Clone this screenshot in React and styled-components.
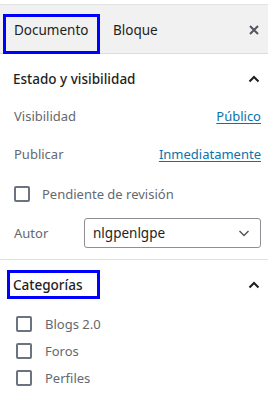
import styled, { createGlobalStyle } from "styled-components";

const GlobalStyle = createGlobalStyle`
    body {
        margin: 0;
        background: #fff;
        font-family: "Noto Sans", "Open Sans", sans-serif;
        font-size: 13px;
        color: #1e1e1e;
    }
`

const ChevronUp = () => (
    <svg width="14" height="14" viewBox="0 0 14 14">
        <path d="M2.5 9.5 L7 5 L11.5 9.5" fill="none" stroke="#1e1e1e" strokeWidth="2" />
    </svg>
)

const CloseIcon = () => (
    <svg width="12" height="12" viewBox="0 0 12 12">
        <path d="M2 2 L10 10 M10 2 L2 10" stroke="#50575e" strokeWidth="2" />
    </svg>
)

const ChevronDown = () => (
    <svg width="14" height="14" viewBox="0 0 14 14">
        <path d="M2.5 5 L7 9.5 L11.5 5" fill="none" stroke="#50575e" strokeWidth="1.5" />
    </svg>
)

const categories = ["Blogs 2.0", "Foros", "Perfiles"]

const App = () => {
    return (
        <>
            <GlobalStyle />
            <Panel>
                <Header>
                    <Tab $active>Documento</Tab>
                    <Tab>Bloque</Tab>
                    <CloseButton><CloseIcon /></CloseButton>
                </Header>

                <Section>
                    <SectionTitle>
                        <TitleText>Estado y visibilidad</TitleText>
                        <ChevronUp />
                    </SectionTitle>
                    <Rows>
                        <Row>
                            <Label>Visibilidad</Label>
                            <LinkText>Público</LinkText>
                        </Row>
                        <Row $top={14}>
                            <Label>Publicar</Label>
                            <LinkText>Inmediatamente</LinkText>
                        </Row>
                        <CheckRow $top={16}>
                            <Box />
                            <Label>Pendiente de revisión</Label>
                        </CheckRow>
                        <Row $top={12}>
                            <Label>Autor</Label>
                            <Select>
                                <span>nlgpenlgpe</span>
                                <ChevronDown />
                            </Select>
                        </Row>
                    </Rows>
                </Section>

                <Section>
                    <SectionTitle>
                        <Marked>Categorías</Marked>
                        <ChevronUp />
                    </SectionTitle>
                    <List>
                        {categories.map((name) =>
                            <ListItem key={name}>
                                <Box />
                                <Label>{name}</Label>
                            </ListItem>
                        )}
                    </List>
                </Section>
            </Panel>
        </>
    )
}

const Panel = styled.div`
    width: 268px;
    padding-top: 4px;
`

const Header = styled.div`
    display: flex;
    align-items: flex-end;
    height: 48px;
    background: #f1f1f2;
    border-top: 1px solid #e2e3e5;
    border-bottom: 1px solid #dcdcde;
    padding-left: 3px;
`

const Tab = styled.div`
    box-sizing: border-box;
    height: 40px;
    margin-bottom: -1px;
    width: ${(p) => (p.$active ? "97px" : "auto")};
    border: 3px solid ${(p) => (p.$active ? "#0000ff" : "transparent")};
    padding: 4px 0 0 ${(p) => (p.$active ? "8px" : "10px")};
    line-height: 18px;
    font-size: 13.5px;
    color: #1e1e1e;
`

const CloseButton = styled.div`
    margin-left: auto;
    margin-right: 8px;
    align-self: center;
    display: flex;
    padding-top: 2px;
`

const Section = styled.div`
    border-bottom: 1px solid #e0e0e0;
    padding: 0 7px 11px 14px;

    &:last-child {
        border-bottom: none;
    }
`

const SectionTitle = styled.div`
    display: flex;
    align-items: center;
    justify-content: space-between;
    height: 50px;
`

const TitleText = styled.span`
    font-weight: 500;
    font-size: 13.5px;
    margin-left: -1px;
`

const Marked = styled.span`
    box-sizing: border-box;
    width: 93px;
    height: 29px;
    margin-left: -7px;
    margin-top: -1px;
    padding-left: 3px;
    border: 3px solid #0000ff;
    display: flex;
    align-items: center;
    font-weight: 500;
    font-size: 13.5px;
`

const Rows = styled.div`
    display: flex;
    flex-direction: column;
`

const Row = styled.div`
    display: flex;
    align-items: center;
    justify-content: space-between;
    min-height: 24px;
    margin-top: ${(p) => p.$top || 0}px;
`

const CheckRow = styled.div`
    display: flex;
    align-items: center;
    gap: 12px;
    height: 24px;
    margin-top: ${(p) => p.$top || 0}px;
`

const Label = styled.span`
    color: #646970;
    font-size: 13px;
`

const LinkText = styled.span`
    color: #0a73aa;
    text-decoration: underline;
    text-underline-offset: 2px;
`

const Box = styled.span`
    box-sizing: border-box;
    width: 16px;
    height: 16px;
    border: 2px solid #6b7280;
    border-radius: 2px;
    flex-shrink: 0;
`

const Select = styled.div`
    box-sizing: border-box;
    width: 177px;
    height: 30px;
    border: 1px solid #8c8f94;
    border-radius: 3px;
    display: flex;
    align-items: center;
    justify-content: space-between;
    padding: 0 9px 0 8px;
    color: #1e1e1e;
    font-size: 13.5px;
`

const List = styled.div`
    display: flex;
    flex-direction: column;
    padding-left: 2px;
`

const ListItem = styled.div`
    display: flex;
    align-items: center;
    gap: 13px;
    height: 27px;
`

export default App
